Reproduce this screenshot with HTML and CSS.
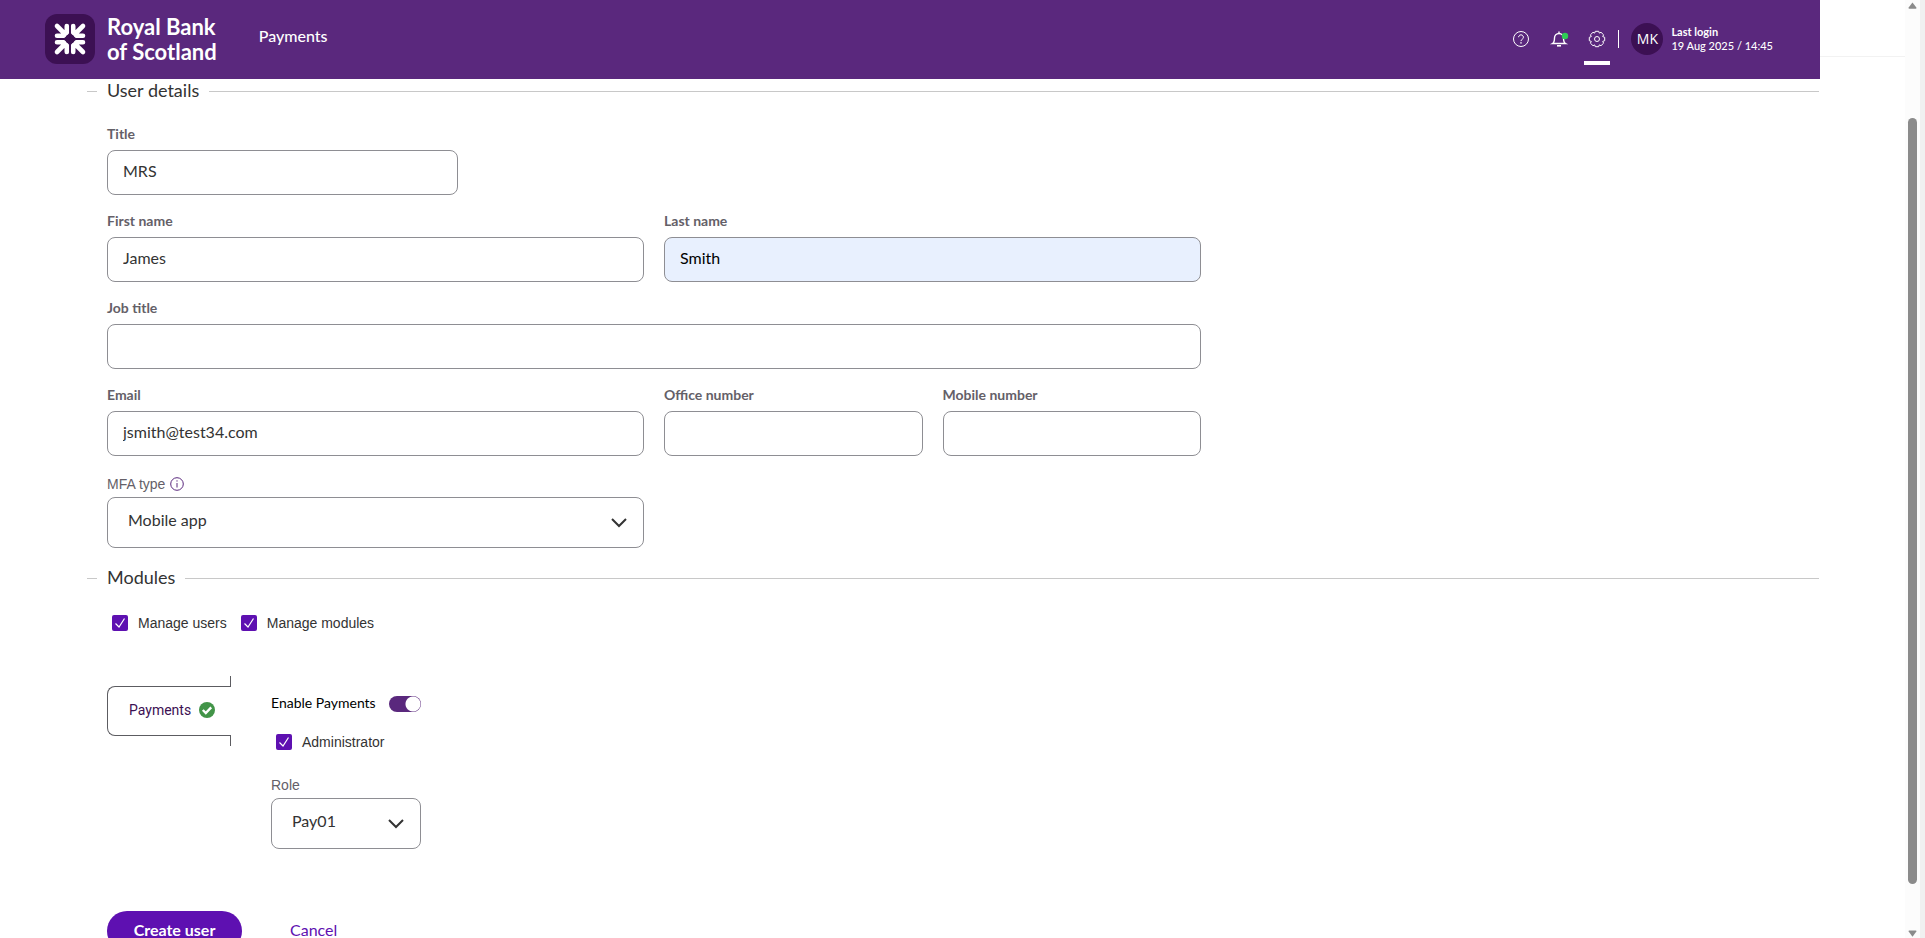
FILE: index.html
```html
<!DOCTYPE html>
<html lang="en">
<head>
<meta charset="utf-8">
<title>Create user</title>
<link rel="stylesheet" href="styles.css">
</head>
<body>
<div class="page">
  <header class="header">
    <a class="brand" href="#">
      <svg class="brand-mark" viewBox="0 0 50 50" aria-hidden="true">
        <defs>
          <path id="arm" d="M12 12L20 20M21.800 12V19M12 21.800H19"/>
        </defs>
        <rect width="50" height="50" rx="12" fill="#3c1053"/>
        <g stroke="#fff" stroke-width="4.600" stroke-linecap="round" fill="none">
          <use href="#arm"/>
          <use href="#arm" transform="matrix(-1 0 0 1 50 0)"/>
          <use href="#arm" transform="matrix(1 0 0 -1 0 50)"/>
          <use href="#arm" transform="matrix(-1 0 0 -1 50 50)"/>
        </g>
        <path d="M25 18.500L31.500 25 25 31.500 18.500 25z" fill="#3c1053"/>
        <path d="M9 25H41M25 9V41" stroke="#3c1053" stroke-width="1.400"/>
      </svg>
      <span class="brand-name">Royal Bank<br>of Scotland</span>
    </a>
    <nav class="nav"><a href="#">Payments</a></nav>
    <div class="tools">
      <button class="tool" type="button" aria-label="Help">
        <svg viewBox="0 0 18 18"><circle cx="9" cy="9" r="7.500"/><path d="M6.600 7.200a2.400 2.400 0 1 1 3.600 2.100c-.8.5-1.200.9-1.200 1.800"/><path d="M9 12.200v1.300" stroke-width="1.500"/></svg>
      </button>
      <button class="tool" type="button" aria-label="Notifications">
        <svg viewBox="0 0 18 18"><path d="M2.500 13.500c1.800-1 2-2.500 2-5.500a4.500 4.500 0 0 1 9 0c0 3 .2 4.500 2 5.500zM9 3.500V1.500" stroke-width="1.400"/><path d="M7 15.800h4" stroke-width="1.600"/><circle class="dot" cx="15" cy="6" r="3.200"/></svg>
      </button>
      <button class="tool tool-active" type="button" aria-label="Settings">
        <svg viewBox="0 0 18 18"><circle cx="9" cy="9" r="2.500"/><path d="M7.300 1.300h3.400l.6 1.800 1.700-.8 2.600 2.500-.9 1.800 2 .7v3.400l-2 .7.9 1.800-2.600 2.500-1.700-.8-.6 1.800H7.300l-.6-1.800-1.700.8-2.600-2.500.9-1.800-2-.7V7.300l2-.7-.9-1.800L5 2.300l1.700.8z" stroke-linejoin="round"/></svg>
      </button>
      <span class="divider"></span>
      <span class="avatar">MK</span>
      <p class="login"><strong>Last login</strong><br>19 Aug 2025 / 14:45</p>
    </div>
  </header>

  <main class="main">
    <form>
      <fieldset class="section">
        <legend>User details</legend>
        <div class="fields">
          <div class="field third"><label for="title">Title</label><input id="title" type="text" value="MRS"></div>
          <div class="field half row-start"><label for="first">First name</label><input id="first" type="text" value="James"></div>
          <div class="field half"><label for="last">Last name</label><input id="last" class="autofilled" type="text" value="Smith"></div>
          <div class="field full"><label for="job">Job title</label><input id="job" type="text"></div>
          <div class="field half"><label for="email">Email</label><input id="email" type="email" value="jsmith@test34.com"></div>
          <div class="field quarter"><label for="office">Office number</label><input id="office" type="tel"></div>
          <div class="field quarter"><label for="mobile">Mobile number</label><input id="mobile" type="tel"></div>
          <div class="choice half">
            <label for="mfa">MFA type
              <svg class="info" viewBox="0 0 14 14" aria-hidden="true"><circle cx="7" cy="7" r="6.300"/><path d="M7 6v4.500M7 3.300v1.300"/></svg>
            </label>
            <div class="select">
              <select id="mfa"><option>Mobile app</option></select>
              <svg class="chevron" viewBox="0 0 16 10" aria-hidden="true"><path d="M1 1l7 7 7-7"/></svg>
            </div>
          </div>
        </div>
      </fieldset>

      <fieldset class="section modules">
        <legend>Modules</legend>
        <div class="checks">
          <label class="check"><input type="checkbox" checked>Manage users</label>
          <label class="check"><input type="checkbox" checked>Manage modules</label>
        </div>
        <div class="module">
          <div class="tab-rail">
            <button class="tab" type="button">Payments
              <svg viewBox="0 0 16 16" aria-hidden="true"><circle cx="8" cy="8" r="8" fill="#429448"/><path d="M3.800 8l3 3 5.400-5.600" fill="none" stroke="#fff" stroke-width="2.400"/></svg>
            </button>
          </div>
          <div class="panel">
            <label class="enable"><span>Enable Payments</span><input class="toggle" type="checkbox" role="switch" checked></label>
            <label class="check"><input type="checkbox" checked>Administrator</label>
            <div class="choice">
              <label for="role">Role</label>
              <div class="select">
                <select id="role"><option>Pay01</option></select>
                <svg class="chevron" viewBox="0 0 16 10" aria-hidden="true"><path d="M1 1l7 7 7-7"/></svg>
              </div>
            </div>
          </div>
        </div>
        <div class="actions">
          <button class="primary" type="submit">Create user</button>
          <a class="cancel" href="#">Cancel</a>
        </div>
      </fieldset>
    </form>
  </main>
  <aside class="gutter"></aside>
</div>
<div class="scrollbar" aria-hidden="true">
  <svg viewBox="0 0 10 8"><path d="M5 0.500L9.500 6.500Q9.500 7.500 8.500 7.500H1.500Q.5 7.500.5 6.500z"/></svg>
  <span class="thumb"></span>
  <svg viewBox="0 0 10 8"><path d="M5 7.500L9.500 1.500Q9.500.5 8.500.5H1.500Q.5.5.5 1.500z"/></svg>
</div>
</body>
</html>
```

FILE: styles.css
```css
* { box-sizing: border-box; }

body {
  margin: 0;
  height: 100vh;
  overflow: hidden;
  display: flex;
  background: #fff;
  color: #333;
  font: 16px/20px Lato, "Open Sans", sans-serif;
}

button, input, select { font: inherit; color: inherit; }

.page {
  flex: 1;
  height: 100vh;
  overflow: hidden;
  display: grid;
  grid-template: auto 1fr / 1fr 85px;
}

.header {
  height: 79px;
  padding: 0 47px 2px 45px;
  display: flex;
  align-items: center;
  background: #5a287d;
  color: #fff;
}

.brand {
  display: flex;
  align-items: center;
  gap: 12px;
  color: inherit;
  text-decoration: none;
}
.brand-mark { width: 50px; height: 50px; }
.brand-name { font-size: 22px; line-height: 25px; font-weight: 700; }
.nav { margin-left: 42px; padding-bottom: 6px; }
.nav a { color: inherit; text-decoration: none; font-weight: 500; }

.tools { margin-left: auto; display: flex; align-items: center; }
.tool {
  width: 26px;
  height: 52px;
  margin-right: 12px;
  padding: 0;
  border: 0;
  border-top: 4px solid transparent;
  border-bottom: 4px solid transparent;
  background: none;
  display: grid;
  place-items: center;
}
.tool svg { width: 18px; height: 18px; fill: none; stroke: #fff; stroke-width: 1; overflow: visible; }
.tool .dot { fill: #2ecc55; stroke: none; }
.tool-active {
  margin-right: 8px;
  background: linear-gradient(#fff, #fff) bottom / 26px 4px no-repeat border-box;
}
.divider { width: 1px; height: 18px; background: #fff; }
.avatar {
  width: 32px;
  height: 32px;
  margin: 0 8px 0 12px;
  border-radius: 50%;
  background: #3c1053;
  display: grid;
  place-items: center;
  font: 14px/16px "Open Sans", sans-serif;
}
.login { margin: 0; font-size: 11px; line-height: 14px; font-weight: 500; }

.gutter { grid-area: 1 / 2 / 3 / 3; border-top: 1px solid #f2f2f2; margin-top: 56px; }

.main { padding: 1px 1px 0 87px; }

.section {
  min-width: 0;
  margin: 0;
  padding: 0 0 0 20px;
  border: 0;
  border-top: 1px solid #c8c8c8;
}
.section legend { margin-left: -10px; padding: 0 10px 3px; font-size: 18px; line-height: 20px; }

.fields {
  width: 64%;
  max-width: 1094px;
  padding: 21px 0 19px;
  display: grid;
  grid-template-columns: repeat(12, 1fr);
  gap: 16px 20px;
}
.third { grid-column: span 4; }
.half { grid-column: span 6; }
.quarter { grid-column: span 3; }
.full { grid-column: span 12; }
.row-start { grid-column: 1 / span 6; }

.field { display: grid; gap: 6px; }
.field label { color: #646068; font-size: 14px; font-weight: 700; }
.field input {
  width: 100%;
  height: 45px;
  padding: 0 15px 5px;
  border: 1px solid #8e8e93;
  border-radius: 8px;
  background: #fff;
}
.field .autofilled { background: #e8f0fe; color: #000; }

.choice { display: grid; gap: 1px; }
.choice label {
  display: flex;
  align-items: center;
  gap: 5px;
  color: #646068;
  font: 14px/24px "Liberation Sans", Arial, sans-serif;
}
.info { width: 14px; height: 14px; fill: none; stroke: #5a287d; }
.select { display: grid; align-items: center; }
.select select {
  grid-area: 1 / 1;
  width: 100%;
  height: 51px;
  padding: 0 48px 5px 20px;
  border: 1px solid #8e8e93;
  border-radius: 8px;
  background: #fff;
  appearance: none;
}
.chevron {
  grid-area: 1 / 1;
  justify-self: end;
  width: 16px;
  height: 10px;
  margin-right: 17px;
  fill: none;
  stroke: #333;
  stroke-width: 2;
  pointer-events: none;
}

.checks { padding: 25px 0 0 5px; display: flex; gap: 14px; }
.check {
  display: flex;
  align-items: center;
  gap: 10px;
  font: 14px/16px "Liberation Sans", Arial, sans-serif;
}
.check input {
  width: 16px;
  height: 16px;
  margin: 0;
  appearance: none;
  border-radius: 2px;
  background: #5e10b1 url("data:image/svg+xml,%3Csvg xmlns='http://www.w3.org/2000/svg' viewBox='0 0 16 16'%3E%3Cpath d='M3.500 8.500l3.500 3.500 5.500-8.500' fill='none' stroke='white' stroke-width='1.200'/%3E%3C/svg%3E");
}

.module { margin-top: 45px; display: flex; align-items: flex-start; gap: 40px; }
.tab-rail { display: grid; grid-template-rows: 10px auto 10px; width: 124px; }
.tab-rail::before, .tab-rail::after { content: ""; border-right: 1px solid #5c5c61; }
.tab {
  height: 50px;
  padding: 0 16px 2px 21px;
  display: flex;
  align-items: center;
  justify-content: space-between;
  border: 1px solid #5c5c61;
  border-right: 0;
  border-radius: 8px 0 0 8px;
  background: #fff;
  color: #3c1053;
  font: 14px/20px Roboto, sans-serif;
}
.tab svg { width: 16px; height: 16px; }

.panel { width: 150px; padding-top: 20px; display: grid; }
.panel .check { margin: 22px 0 23px 5px; }
.enable {
  height: 16px;
  display: flex;
  align-items: center;
  justify-content: space-between;
  color: #000;
  font-size: 14px;
  line-height: 16px;
  white-space: nowrap;
}
.enable span { padding-bottom: 3px; }
.toggle {
  width: 32px;
  height: 16px;
  margin: 0;
  appearance: none;
  border-radius: 8px;
  background: radial-gradient(circle at 24px 8px, #fff 7px, #5a287d 8px);
}

.actions { margin-top: 62px; display: flex; align-items: center; gap: 48px; }
.primary {
  width: 135px;
  height: 40px;
  padding: 0 0 2px;
  border: 0;
  border-radius: 20px;
  background: #5e10b1;
  color: #fff;
  font-weight: 700;
}
.cancel { padding-bottom: 2px; color: #5e10b1; text-decoration: none; }

.scrollbar {
  width: 20px;
  padding: 2px 3px 0 3px;
  border-right: 5px solid #f0f0f0;
  background: #fcfcfc;
  display: grid;
  grid-template-rows: 8px 1fr 8px;
}
.scrollbar svg { width: 9px; fill: #8b8b8b; }
.thumb { width: 9px; margin: 108px 0 46px; border-radius: 5px; background: #8b8b8b; }
```
